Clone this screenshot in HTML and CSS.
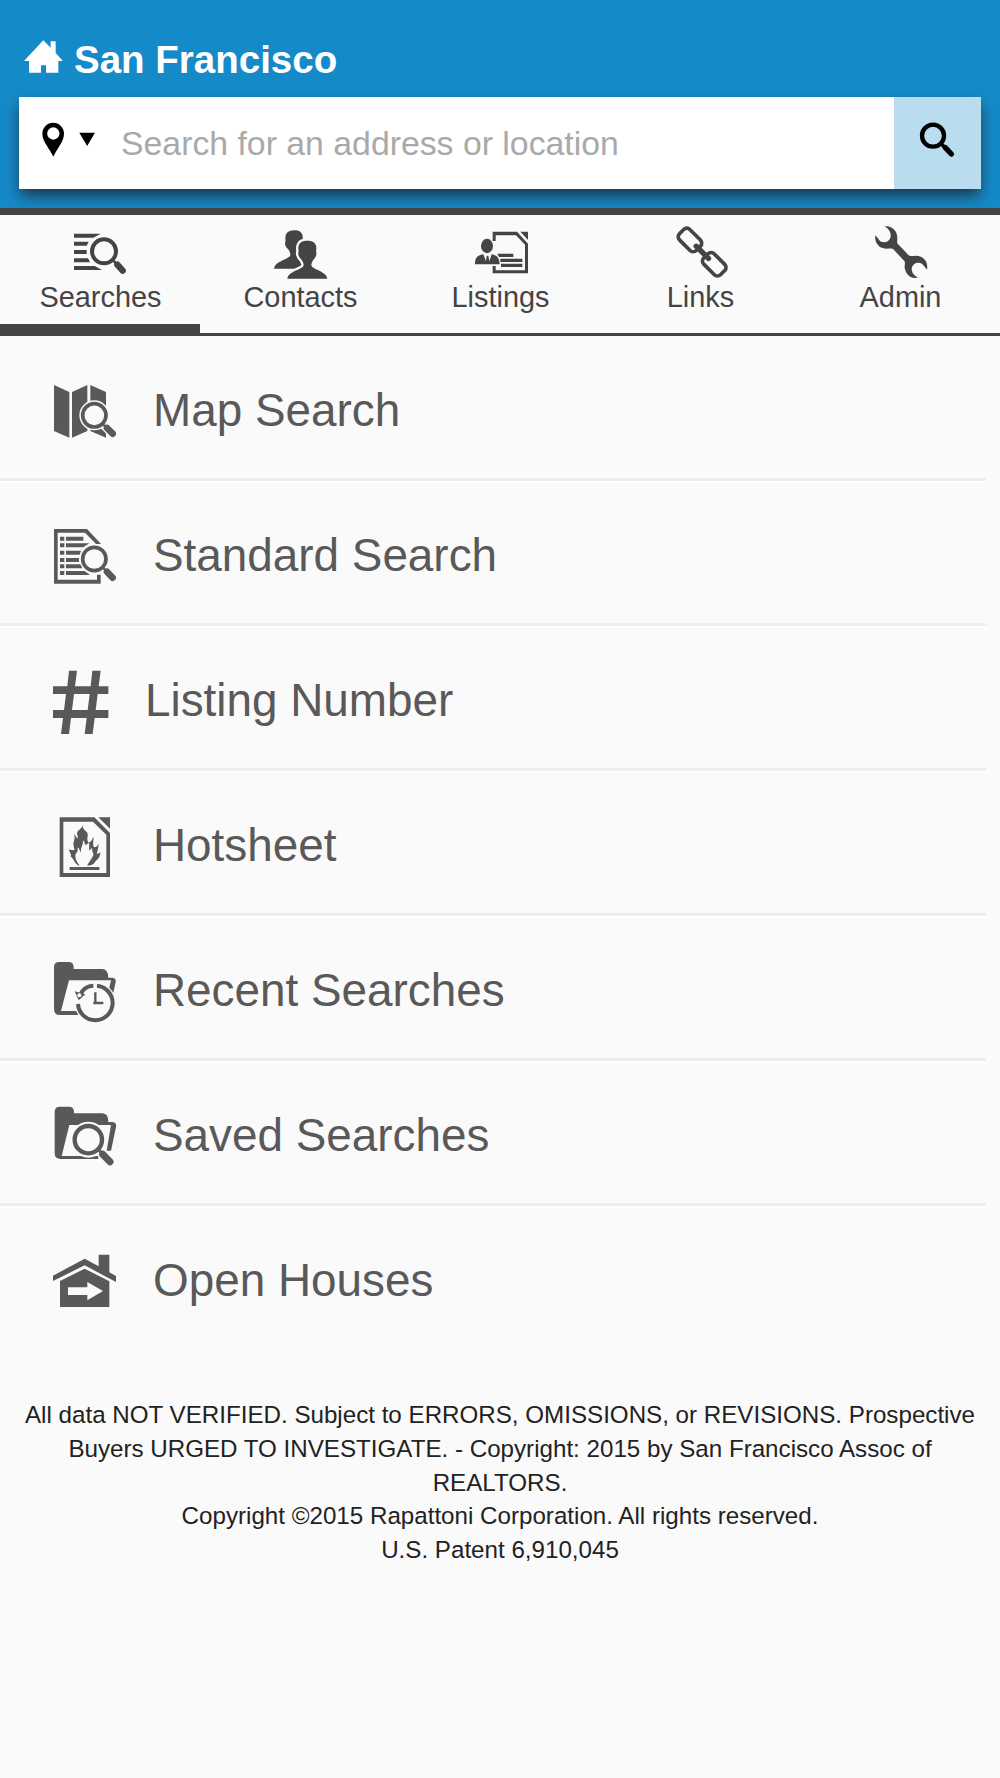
FILE: index.html
```html
<!DOCTYPE html>
<html lang="en">
<head>
<meta charset="utf-8">
<title>San Francisco</title>
<link rel="stylesheet" href="styles.css">
</head>
<body>
<header class="header">
  <h1 class="title">
    <svg class="home-icon" viewBox="72 119 117 100"><path d="M72 182L130 120L152 142V123H167V158L189 182H175V217H138V195H123V217H87V182Z"/></svg>
    <span>San Francisco</span>
  </h1>
  <div class="search">
    <svg class="pin-icon" viewBox="57 291 240 274"><path fill-rule="evenodd" d="M160 470C150 447 127 425 127 401A32.500 32.500 0 0 1 192 401C192 425 170 447 160 470ZM160 382A18.500 18.500 0 1 0 160 419A18.500 18.500 0 1 0 160 382ZM238 398H285L261.500 438Z"/></svg>
    <span class="placeholder">Search for an address or location</span>
    <button class="search-button" aria-label="Search">
      <svg class="lens-icon" viewBox="1182 291 261 274"><circle cx="1299" cy="407" r="33" fill="none" stroke="#000" stroke-width="13"/><path d="M1325 433L1354 462" stroke="#000" stroke-width="11"/><path d="M1336 443L1354 462" stroke="#000" stroke-width="16" stroke-linecap="round"/></svg>
    </button>
  </div>
</header>

<nav class="tabs">
  <a class="tab active">
    <svg viewBox="0 30 600 210"><path d="M222 86H302L280 98H222ZM222 110H266L260 122H222ZM222 135H260V147H222ZM222 160H264L270 172H222ZM222 183H284L306 195H222Z"/><circle class="ring" cx="312" cy="139" r="36" stroke-width="12"/><path class="handle" d="M341 168L350 177" stroke-width="8"/><path class="handle round" d="M352 179L368 197" stroke-width="19"/></svg>
    <span>Searches</span>
  </a>
  <a class="tab">
    <svg viewBox="600 30 600 210"><path d="M822 191C823 171 858 164 868 155C874 149 870 142 865 133C855 127 853 112 857 109C853 88 862 76 883 76C904 76 912 88 907 109C911 112 909 127 900 133C895 142 891 149 897 155C907 164 939 171 941 191Z"/><path class="cutout" d="M862 222C863 202 898 195 908 186C914 180 910 173 905 164C895 158 893 143 896 139C892 118 900 107 922 107C944 107 952 118 948 139C951 143 949 158 940 164C935 173 931 180 937 186C947 195 980 202 982 222Z" stroke-width="14"/><path d="M862 221C863 202 898 195 908 186C914 180 910 173 905 164C895 158 893 143 896 139C892 118 900 107 922 107C944 107 952 118 948 139C951 143 949 158 940 164C935 173 931 180 937 186C947 195 980 202 982 221Z"/></svg>
    <span>Contacts</span>
  </a>
  <a class="tab">
    <svg viewBox="-60 30 600 210"><path d="M218 80H291L324 116V205H218V183H227V196H315V119L288 91H227V108H218ZM301 80H324V105ZM232 146H280V156H237ZM241 161H307V171H241ZM243 176H307V186H243Z"/><ellipse cx="201" cy="123" rx="18" ry="21.500"/><path d="M165 178C165 160 170 151 190 148L198 169L200 152H205L208 169L215 148C233 151 238 160 239 178Z"/></svg>
    <span>Listings</span>
  </a>
  <a class="tab">
    <svg viewBox="540 30 600 210"><g transform="rotate(45 847 142)"><rect class="ring" x="759" y="120" width="71" height="44" rx="13" stroke-width="11"/><rect class="ring" x="862" y="120" width="71" height="44" rx="13" stroke-width="11"/><path d="M821 142H873" stroke="#444" stroke-width="16" stroke-linecap="round"/></g></svg>
    <span>Links</span>
  </a>
  <a class="tab">
    <svg viewBox="300 30 600 210"><path d="M553 64C576 60 593 78 592 100C592 107 590 112 593 116L626 151C631 155 638 152 648 152C673 153 685 172 681 194L672 183C664 168 640 170 636 187C632 200 643 213 654 217C635 224 617 209 614 188C613 181 617 173 613 168L580 133C576 129 569 131 559 131C536 131 523 112 526 91L535 101C542 116 565 115 571 98C575 85 567 71 553 64Z"/></svg>
    <span>Admin</span>
  </a>
</nav>

<main class="list">
  <a class="row">
    <svg class="icon" viewBox="-90 -72 456 426"><path d="M72 75L118 96V233L72 213ZM126 96L172 75V213L126 233ZM181 75L228 96V233L181 213Z"/><circle class="cutout" cx="193" cy="166" r="42" stroke-width="6"/><path class="cutout round" d="M222 194L248 221" stroke-width="28"/><circle class="ring" cx="193" cy="166" r="35" stroke-width="11"/><path class="handle" d="M219 193L230 203" stroke-width="7"/><path class="handle round" d="M231 204L248 221" stroke-width="20"/></svg>
    <span>Map Search</span>
  </a>
  <a class="row">
    <svg class="icon" viewBox="-90 363 456 426"><path d="M72 507H171L213 552H198L165 518H83V659H201V644H212V671H72Z"/><path d="M90 530H103V542H90ZM90 550H103V562H90ZM90 572H103V584H90ZM90 594H103V606H90ZM90 613H103V625H90ZM90 633H103V645H90ZM108 530H160V542H108ZM108 550H178L160 562H108ZM108 572H153L149 584H108ZM108 594H147V606H108ZM108 613H151L157 625H108ZM108 633H164L180 645H108Z"/><circle class="ring" cx="193" cy="597" r="35" stroke-width="11"/><path class="handle" d="M219 623L230 634" stroke-width="7"/><path class="handle round" d="M231 635L248 653" stroke-width="20"/></svg>
    <span>Standard Search</span>
  </a>
  <a class="row compact">
    <svg class="icon" viewBox="-90 -42 435 426"><path fill-rule="evenodd" d="M117 92H141L135 139H182L187 92H212L206 139H235V162H203L197 210H235V234H194L188 282H164L170 234H123L117 282H93L99 234H69V210H102L108 162H69V139H112ZM132 162L126 210H173L179 162Z"/></svg>
    <span>Listing Number</span>
  </a>
  <a class="row">
    <svg class="icon" viewBox="-90 393 456 426"><path fill-rule="evenodd" d="M89 532H193L240 579V711H89ZM100 545V699H229V584L189 545ZM205 532H240V566ZM119 681H208V690H119Z"/><path d="M158 555C155 566 148 568 143 574C138 582 146 589 142 596C138 592 137 586 132 583C138 601 127 606 131 617C130 622 135 626 133 631C125 628 122 633 116 626C119 640 126 642 122 650C130 651 134 675 149 677C139 662 134 654 137 641C144 637 143 630 143 622C151 627 147 633 153 637C151 621 160 618 159 601C164 605 163 611 167 616C171 611 175 612 176 607C180 617 176 624 178 632C182 628 183 626 187 625C184 635 192 639 190 646C185 657 177 667 171 677C186 677 193 671 197 663C202 659 211 653 211 636C206 641 203 641 200 642C204 629 205 620 206 611C202 620 197 620 193 622C186 615 192 602 190 590C185 600 185 606 175 607C168 597 177 587 171 577C164 570 157 565 158 555Z"/></svg>
    <span>Hotsheet</span>
  </a>
  <a class="row">
    <svg class="icon" viewBox="-90 -42 456 426"><path d="M72 112Q72 96 88 96H115Q131 96 131 112V117H217Q234 117 235 143H247Q259 144 257 157L245 210H230L243 151H117L93 243H160V255H90Q72 255 72 237Z"/><circle cx="196" cy="219" r="62" fill="#fafafa"/><path class="ring" d="M201 167A52 52 0 1 1 144 222M151 194Q162 168 190 167" stroke-width="12"/><path d="M134 184L166 193L146 211Z"/><circle cx="148" cy="196" r="6" fill="#fafafa"/><path class="ring" d="M196 187V219M190 219H220" stroke-width="7"/></svg>
    <span>Recent Searches</span>
  </a>
  <a class="row">
    <svg class="icon" viewBox="-90 393 456 426"><path d="M74 546Q74 530 90 530H117Q132 530 132 546V550H218Q235 551 235 576H247Q261 577 258 591L243 662H230L243 585H118L95 678H205V687H92Q74 687 74 670Z"/><circle cx="175" cy="629" r="54" fill="#fafafa"/><path class="cutout round" d="M213 668L240 695" stroke-width="28"/><circle class="ring" cx="175" cy="629" r="41" stroke-width="13"/><path class="handle" d="M205 659L217 671" stroke-width="9"/><path class="handle round" d="M218 673L240 695" stroke-width="21"/></svg>
    <span>Saved Searches</span>
  </a>
  <a class="row">
    <svg class="icon" viewBox="-90 48 456 426"><path fill-rule="evenodd" d="M69 257L164 206L206 229V194H238V247L258 258V276L164 226L69 273ZM90 273L164 236L238 274V351H90ZM114 292V315H172V331L219 303L172 276V292Z"/></svg>
    <span>Open Houses</span>
  </a>
</main>

<footer class="footer">
  <p>All data NOT VERIFIED. Subject to ERRORS, OMISSIONS, or REVISIONS. Prospective<br>Buyers URGED TO INVESTIGATE. - Copyright: 2015 by San Francisco Assoc of<br>REALTORS.</p>
  <p>Copyright ©2015 Rapattoni Corporation. All rights reserved.</p>
  <p>U.S. Patent 6,910,045</p>
</footer>
</body>
</html>
```
FILE: styles.css
```css
* { box-sizing: border-box; }

body {
  margin: 0;
  min-height: 1778px;
  background: #fafafa;
  color: #444;
  font-family: "Liberation Sans", Arial, sans-serif;
}

svg { display: block; flex: none; }

.header {
  height: 215px;
  padding: 0 19.500px 0 19px;
  background: #158ac8;
  border-bottom: 7px solid #444;
}

.title {
  display: flex;
  align-items: flex-start;
  gap: 11px;
  height: 97px;
  margin: 0;
  padding: 39.500px 0 0 5px;
  color: #fff;
  font-size: 38.500px;
  line-height: 39px;
}

.home-icon {
  width: 39px;
  height: 33.300px;
  fill: #fff;
}

.search {
  display: flex;
  height: 91.500px;
  background: #fff;
  box-shadow: 0 8px 14px -1px rgba(30, 40, 50, 0.85);
}

.pin-icon { width: 80px; height: 91.300px; }

.placeholder {
  flex: 1;
  padding-left: 22px;
  color: #a9a9a9;
  font-size: 33.800px;
  line-height: 93px;
  white-space: nowrap;
}

.search-button {
  width: 87px;
  padding: 0;
  border: 0;
  background: #b9dcef;
}

.lens-icon { width: 87px; height: 91.300px; }

.tabs {
  display: grid;
  grid-template-columns: repeat(5, 1fr);
  height: 121px;
  border-bottom: 3px solid #444;
}

.tab {
  height: 121px;
  font-size: 28.900px;
  line-height: 25px;
  text-align: center;
}

.tab svg { width: 200px; height: 70px; fill: #444; }
.tab span { display: block; padding-left: 1px; }
.active { border-bottom: 12px solid #444; }

.ring { fill: none; stroke: #444; }
.handle { fill: none; stroke: #444; }
.round { stroke-linecap: round; }
.cutout { fill: none; stroke: #fafafa; }

.list { width: 985.500px; }

.row {
  display: flex;
  height: 145px;
  border-bottom: 3px solid #eee;
  color: #595959;
  font-size: 45.850px;
  line-height: 148px;
}

.row + .row { box-shadow: inset 0 2px #fff; }

.row:last-child { border-bottom: 0; }

.icon { width: 152px; height: 142px; margin-right: 1px; fill: #595959; }
.compact .icon { width: 145px; margin-right: 0; }
.row .ring, .row .handle { stroke: #595959; }
.row circle.cutout { fill: #fafafa; }

.footer {
  padding-top: 47px;
  color: #222;
  font-size: 24.160px;
  line-height: 33.800px;
  text-align: center;
}

.footer p { margin: 0; }
```
